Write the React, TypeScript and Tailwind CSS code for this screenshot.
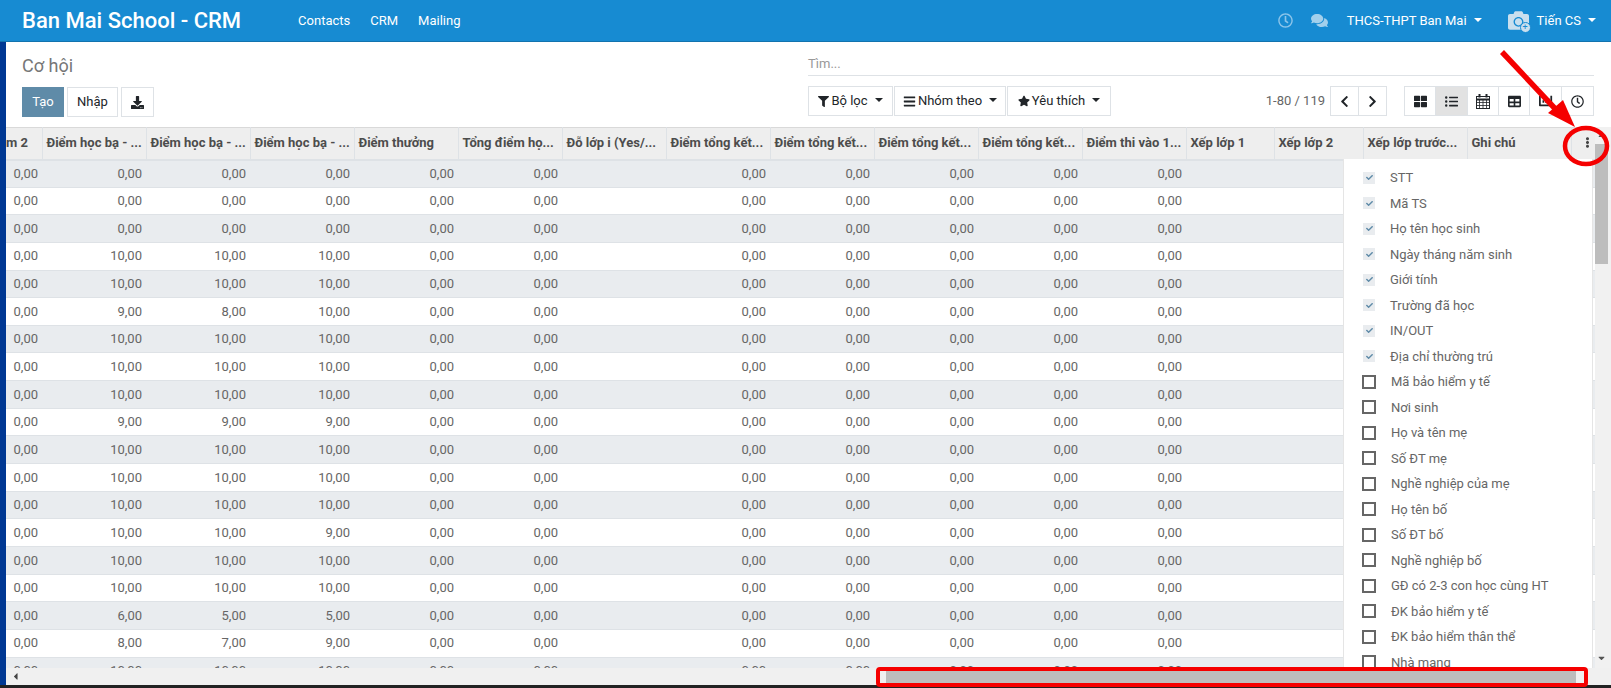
import {
  FaCamera,
  FaCaretLeft,
  FaCaretDown,
  FaCaretUp,
  FaChartBar,
  FaCheck,
  FaChevronLeft,
  FaChevronRight,
  FaComments,
  FaDownload,
  FaEllipsisV,
  FaFilter,
  FaBars,
  FaListUl,
  FaRegClock,
  FaStar,
  FaTable,
  FaThLarge,
} from "react-icons/fa";

const columns = [
  { label: "m 2", width: 36, right: true },
  { label: "Điểm học bạ - ...", width: 104, right: true },
  { label: "Điểm học bạ - ...", width: 104, right: true },
  { label: "Điểm học bạ - ...", width: 104, right: true },
  { label: "Điểm thưởng", width: 104, right: true },
  { label: "Tổng điểm họ...", width: 104, right: true },
  { label: "Đỗ lớp i (Yes/...", width: 104, right: false },
  { label: "Điểm tổng kết...", width: 104, right: true },
  { label: "Điểm tổng kết...", width: 104, right: true },
  { label: "Điểm tổng kết...", width: 104, right: true },
  { label: "Điểm tổng kết...", width: 104, right: true },
  { label: "Điểm thi vào 1...", width: 104, right: true },
  { label: "Xếp lớp 1", width: 88, right: false },
  { label: "Xếp lớp 2", width: 89, right: false },
  { label: "Xếp lớp trước...", width: 104, right: false },
  { label: "Ghi chú", width: 104, right: false },
];

// three "Điểm học bạ" columns per row, the rest of the scores are 0,00
const scores = [
  ["0,00", "0,00", "0,00"],
  ["0,00", "0,00", "0,00"],
  ["0,00", "0,00", "0,00"],
  ["10,00", "10,00", "10,00"],
  ["10,00", "10,00", "10,00"],
  ["9,00", "8,00", "10,00"],
  ["10,00", "10,00", "10,00"],
  ["10,00", "10,00", "10,00"],
  ["10,00", "10,00", "10,00"],
  ["9,00", "9,00", "9,00"],
  ["10,00", "10,00", "10,00"],
  ["10,00", "10,00", "10,00"],
  ["10,00", "10,00", "10,00"],
  ["10,00", "10,00", "9,00"],
  ["10,00", "10,00", "10,00"],
  ["10,00", "10,00", "10,00"],
  ["6,00", "5,00", "5,00"],
  ["8,00", "7,00", "9,00"],
  ["10,00", "10,00", "10,00"],
];

const checkedFields = [
  "STT",
  "Mã TS",
  "Họ tên học sinh",
  "Ngày tháng năm sinh",
  "Giới tính",
  "Trường đã học",
  "IN/OUT",
  "Địa chỉ thường trú",
];

const otherFields = [
  "Mã bảo hiểm y tế",
  "Nơi sinh",
  "Họ và tên mẹ",
  "Số ĐT mẹ",
  "Nghề nghiệp của mẹ",
  "Họ tên bố",
  "Số ĐT bố",
  "Nghề nghiệp bố",
  "GĐ có 2-3 con học cùng HT",
  "ĐK bảo hiểm y tế",
  "ĐK bảo hiểm thân thể",
  "Nhà mạng",
];

const Caret = () => (
  <span className="ml-[7px] inline-block h-0 w-0 translate-y-[-1px] border-x-[4px] border-t-[4px] border-x-transparent border-t-current align-middle" />
);

const CalendarIcon = () => (
  <svg width="14" height="15" viewBox="0 0 14 15" fill="none" stroke="#212529">
    <rect x="0.5" y="2.5" width="13" height="12" />
    <path d="M0 5.5H14" strokeWidth="2" />
    <path d="M0.5 8.5H13.5M0.5 11.5H13.5M3.5 6V14.5M7 6V14.5M10.5 6V14.5" strokeWidth="0.8" />
    <path d="M3.5 0V3.5M10.5 0V3.5" strokeWidth="2" />
  </svg>
);

function Navbar() {
  return (
    <header className="flex h-[42px] shrink-0 items-center border-b border-[#1273ae] bg-[#178bd2] text-white">
      <div className="ml-[22px] text-[22px] font-medium leading-none">Ban Mai School - CRM</div>
      <nav className="ml-[57px] flex gap-[20px] text-[13px]">
        <span>Contacts</span>
        <span>CRM</span>
        <span>Mailing</span>
      </nav>
      <div className="ml-auto flex items-center text-[13px]">
        <FaRegClock className="text-[15px] text-[#8cc5ea]" />
        <FaComments className="ml-[18px] text-[17px] text-[#a3d0ec]" />
        <span className="ml-[19px]">THCS-THPT Ban Mai</span>
        <Caret />
        <span className="relative ml-[26px] text-[21px] text-[#c9dfee]">
          <FaCamera />
          <span className="absolute -bottom-[2px] -right-[2px] flex h-[11px] w-[11px] items-center justify-center rounded-full border border-[#178bd2] bg-[#c9dfee] text-[9px] leading-none text-[#178bd2]">
            +
          </span>
        </span>
        <span className="ml-[8px]">Tiến CS</span>
        <Caret />
        <span className="w-[15px]" />
      </div>
    </header>
  );
}

function ControlPanel() {
  const btn = "flex h-[30px] items-center justify-center border border-[#dee2e6] text-[13px] text-[#212529]";
  return (
    <section className="flex h-[85px] shrink-0 pl-[16px] pr-[17px] text-[13px]">
      <div className="flex w-[786px] flex-col">
        <h1 className="mt-[12px] h-[33px] text-[18px] leading-[24px] text-[#777777]">Cơ hội</h1>
        <div className="flex gap-[3px]">
          <button className="h-[30px] w-[42px] bg-[#5f8ba8] text-white">Tạo</button>
          <button className={`${btn} w-[51px] bg-white`}>Nhập</button>
          <button className={`${btn} w-[33px] bg-white`}>
            <FaDownload className="text-[13px]" />
          </button>
        </div>
      </div>
      <div className="flex flex-1 flex-col">
        <div className="mt-[11px] h-[23px] border-b border-[#dee2e6] text-[13px] leading-[22px] text-[#999999]">Tìm...</div>
        <div className="mt-[10px] flex items-center">
          <div className="flex">
            <button className={`${btn} w-[85px] bg-white`}>
              <FaFilter className="mr-[2px] text-[11px]" />
              Bộ lọc
              <Caret />
            </button>
            <button className={`${btn} ml-[1px] w-[112px] bg-white`}>
              <FaBars className="mr-[2px] text-[13px]" />
              Nhóm theo
              <Caret />
            </button>
            <button className={`${btn} ml-[1px] w-[104px] bg-white`}>
              <FaStar className="mr-[2px] text-[12px]" />
              Yêu thích
              <Caret />
            </button>
          </div>
          <span className="ml-auto mr-[5px] text-[#666666]">1-80 / 119</span>
          <div className="flex">
            <button className={`${btn} w-[29px] bg-white`}>
              <FaChevronLeft className="text-[13px]" />
            </button>
            <button className={`${btn} -ml-px w-[29px] bg-white`}>
              <FaChevronRight className="text-[13px]" />
            </button>
          </div>
          <div className="ml-[17px] flex">
            <button className={`${btn} w-[32px] bg-white`}>
              <FaThLarge className="text-[13px]" />
            </button>
            <button className={`${btn} -ml-px w-[33px] bg-[#e2e2e2]`}>
              <FaListUl className="text-[13px]" />
            </button>
            <button className={`${btn} -ml-px w-[32px] bg-white`}>
              <CalendarIcon />
            </button>
            <button className={`${btn} -ml-px w-[32px] bg-white`}>
              <FaTable className="text-[13px]" />
            </button>
            <button className={`${btn} -ml-px w-[33px] bg-white`}>
              <FaChartBar className="text-[14px]" />
            </button>
            <button className={`${btn} -ml-px w-[33px] bg-white`}>
              <FaRegClock className="text-[13px]" />
            </button>
          </div>
        </div>
      </div>
    </section>
  );
}

function DataTable() {
  return (
    <div className="min-h-0 flex-1 overflow-hidden">
      <table className="w-[1605px] table-fixed border-collapse text-[13px] text-[#666666]">
        <colgroup>
          {columns.map((c, i) => (
            <col key={i} style={{ width: c.width }} />
          ))}
          <col style={{ width: 40 }} />
        </colgroup>
        <thead>
          <tr className="h-[32px] border-t border-b-2 border-t-[#d9d9d9] border-b-[#dee2e6] bg-[#eeeeee] text-[#4c4c4c]">
            {columns.map((c, i) => (
              <th
                key={i}
                className={`overflow-hidden whitespace-nowrap border-l border-[#dee2e6] pb-[2px] text-left text-[13px] font-bold first:border-l-0 ${
                  i === 0 ? "px-0" : "pl-[4px] pr-0"
                }`}
              >
                {c.label}
              </th>
            ))}
            <th className="border-l border-[#dee2e6] pb-[2px]">
              <FaEllipsisV className="ml-[10px] text-[11px] text-[#444444]" />
            </th>
          </tr>
        </thead>
        <tbody>
          {scores.map((row, r) => (
            <tr key={r} className={`h-[27.65px] border-t border-[#dee2e6] ${r % 2 === 0 ? "bg-[#e9ecef]" : "bg-white"}`}>
              {columns.map((c, i) => {
                let value = "";
                if (i === 0) value = "0,00";
                else if (i <= 3) value = row[i - 1];
                else if (c.right) value = "0,00";
                return (
                  <td key={i} className="overflow-hidden whitespace-nowrap px-[4px] py-0 text-right">
                    {value}
                  </td>
                );
              })}
              <td />
            </tr>
          ))}
        </tbody>
      </table>
    </div>
  );
}

function ColumnMenu() {
  return (
    <div className="absolute bottom-0 right-[18px] top-[32px] w-[250px] overflow-hidden border-x border-[#e5e5e5] bg-white pl-[18px] pt-[6px] text-[13px] text-[#666666]">
      {checkedFields.map((f) => (
        <div key={f} className="flex h-[25.5px] items-center">
          <span className="ml-px flex h-[12px] w-[12px] items-center justify-center bg-[#e9ecef] text-[7px] text-[#5f8ba8]">
            <FaCheck />
          </span>
          <span className="ml-[15px]">{f}</span>
        </div>
      ))}
      {otherFields.map((f) => (
        <div key={f} className="flex h-[25.5px] items-center">
          <span className="h-[14px] w-[14px] border-2 border-[#666666] bg-white" />
          <span className="ml-[15px]">{f}</span>
        </div>
      ))}
    </div>
  );
}

function VerticalScrollbar() {
  return (
    <div className="absolute bottom-0 right-0 top-0 flex w-[16px] flex-col items-start bg-[#f1f1f1] text-[#555555]">
      <FaCaretUp className="ml-[1px] mt-[3px] h-[10px] text-[11px]" />
      <div className="mt-[4px] h-[120px] w-[13px] bg-[#bdbdbd]" />
      <FaCaretDown className="mb-[5px] ml-[1px] mt-auto h-[10px] text-[11px]" />
    </div>
  );
}

function HorizontalScrollbar() {
  return (
    <div className="flex h-[17px] shrink-0 items-center bg-[#f0f0f0] text-[#444444]">
      <FaCaretLeft className="ml-[4px] text-[11px]" />
      <div className="ml-[865px] h-[14px] w-[690px] bg-[#bdbdbd]" />
    </div>
  );
}

// red marks drawn over the screenshot
function Annotations() {
  return (
    <svg className="pointer-events-none absolute left-0 top-0" width="1611" height="688" viewBox="0 0 1611 688" fill="none">
      <path d="M1502 52 L1562 116" stroke="#f50000" strokeWidth="5.5" />
      <path d="M1575 127 L1548 113 L1563 100 Z" fill="#f50000" />
      <ellipse cx="1586" cy="146" rx="21" ry="18" stroke="#f50000" strokeWidth="4.5" />
      <rect x="878" y="669" width="708" height="16" rx="2" stroke="#f50000" strokeWidth="4" />
    </svg>
  );
}

export default function App() {
  return (
    <div className="relative flex h-[688px] w-[1611px] flex-col overflow-hidden bg-white font-['Roboto',sans-serif]">
      <Navbar />
      <div className="flex min-h-0 flex-1">
        <div className="w-[6px] shrink-0 bg-[#003893]" />
        <main className="flex min-w-0 flex-1 flex-col">
          <ControlPanel />
          <div className="relative flex min-h-0 flex-1 flex-col">
            <div className="relative flex min-h-0 flex-1 overflow-hidden">
              <DataTable />
              <ColumnMenu />
              <VerticalScrollbar />
            </div>
            <HorizontalScrollbar />
          </div>
        </main>
      </div>
      <div className="h-[3px] shrink-0 bg-[#222222]" />
      <Annotations />
    </div>
  );
}
